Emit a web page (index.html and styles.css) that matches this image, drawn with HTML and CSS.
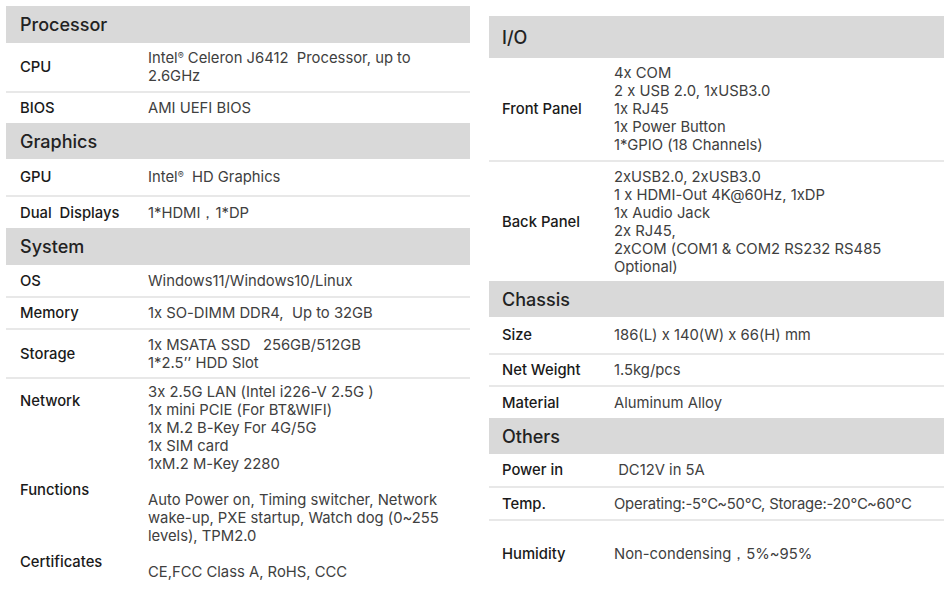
FILE: index.html
```html
<!DOCTYPE html>
<html lang="en">
<head>
<meta charset="utf-8">
<title>Specifications</title>
<link rel="stylesheet" href="styles.css">
</head>
<body>
<div class="page">
  <div class="col col-left">
    <div class="sec-head h37">Processor</div>
    <div class="row sep h48"><div class="lbl">CPU</div><div class="val">Intel<sup>®</sup> Celeron J6412&nbsp; Processor, up to<br>2.6GHz</div></div>
    <div class="row h30"><div class="lbl">BIOS</div><div class="val">AMI UEFI BIOS</div></div>
    <div class="sec-head h36">Graphics</div>
    <div class="row sep h36"><div class="lbl">GPU</div><div class="val">Intel<sup>®</sup>&nbsp; HD Graphics</div></div>
    <div class="row h31"><div class="lbl">Dual&nbsp; Displays</div><div class="val">1*HDMI，1*DP</div></div>
    <div class="sec-head h37">System</div>
    <div class="row sep h31"><div class="lbl">OS</div><div class="val">Windows11/Windows10/Linux</div></div>
    <div class="row sep h30"><div class="lbl">Memory</div><div class="val">1x SO-DIMM DDR4,&nbsp; Up to 32GB</div></div>
    <div class="row sep h47"><div class="lbl">Storage</div><div class="val">1x MSATA SSD&nbsp;&nbsp; 256GB/512GB<br>1*2.5’’ HDD Slot</div></div>
    <div class="row top net"><div class="lbl">Network</div><div class="val">3x 2.5G LAN (Intel i226-V 2.5G )<br>1x mini PCIE (For BT&amp;WIFI)<br>1x M.2 B-Key For 4G/5G<br>1x SIM card<br>1xM.2 M-Key 2280</div></div>
    <div class="row top offset"><div class="lbl">Functions</div><div class="val">Auto Power on, Timing switcher, Network<br>wake-up, PXE startup, Watch dog (0~255<br>levels), TPM2.0</div></div>
    <div class="row top offset"><div class="lbl">Certificates</div><div class="val">CE,FCC Class A, RoHS, CCC</div></div>
  </div>
  <div class="col col-right">
    <div class="sec-head h42">I/O</div>
    <div class="row sep h102"><div class="lbl">Front Panel</div><div class="val">4x COM<br>2 x USB 2.0, 1xUSB3.0<br>1x RJ45<br>1x Power Button<br>1*GPIO (18 Channels)</div></div>
    <div class="row h119"><div class="lbl">Back Panel</div><div class="val">2xUSB2.0, 2xUSB3.0<br>1 x HDMI-Out 4K@60Hz, 1xDP<br>1x Audio Jack<br>2x RJ45,<br>2xCOM (COM1 &amp; COM2 RS232 RS485<br>Optional)</div></div>
    <div class="sec-head h36">Chassis</div>
    <div class="row sep h36"><div class="lbl">Size</div><div class="val">186(L) x 140(W) x 66(H) mm</div></div>
    <div class="row sep h30"><div class="lbl">Net Weight</div><div class="val">1.5kg/pcs</div></div>
    <div class="row h31"><div class="lbl">Material</div><div class="val">Aluminum Alloy</div></div>
    <div class="sec-head h36">Others</div>
    <div class="row sep h32"><div class="lbl">Power in</div><div class="val">&nbsp;DC12V in 5A</div></div>
    <div class="row sep h31"><div class="lbl">Temp.</div><div class="val tight">Operating:-5<span class="deg">℃</span>~50<span class="deg">℃</span>, Storage:-20<span class="deg">℃</span>~60<span class="deg">℃</span></div></div>
    <div class="row top hum"><div class="lbl">Humidity</div><div class="val">Non-condensing，5%~95%</div></div>
  </div>
</div>
</body>
</html>
```

FILE: styles.css
```css
* { box-sizing: border-box; }
html, body { margin: 0; padding: 0; background: #ffffff; }
body {
  font-family: Inter, "Noto Sans", "DejaVu Sans", sans-serif;
  font-size: 14.8px;
  font-feature-settings: "calt" 0;
  color: #3a3a3a;
}
.page {
  display: flex;
  align-items: flex-start;
  gap: 19px;
  padding: 6px 0 0 6px;
}
.col { display: flex; flex-direction: column; }
.col-left { width: 464px; }
.col-right { width: 455px; margin-top: 10px; }

.sec-head {
  background: #d9d9d9;
  color: #222222;
  font-size: 18px;
  font-weight: 500;
  display: flex;
  align-items: center;
  padding-left: 14px;
}
.col-right .sec-head { padding-left: 13px; }

.row {
  display: grid;
  grid-template-columns: 128px 1fr;
  align-items: center;
  padding-left: 14px;
  line-height: 18px;
}
.col-right .row { grid-template-columns: 112px 1fr; padding-left: 13px; }
.row.sep { border-bottom: 2px solid #e8e8e8; }
.row.top { align-items: start; }

.lbl { color: #1a1a1a; font-weight: 500; white-space: nowrap; }
.val { color: #404040; white-space: nowrap; }
.val.tight { letter-spacing: -0.2px; }
.val sup { font-size: 9px; vertical-align: 4px; line-height: 0; }
.deg { letter-spacing: -1px; }

.h30 { height: 32px; }
.h31 { height: 33px; }
.h32 { height: 34px; }
.h36 { height: 36px; }
.h37 { height: 37px; }
.h42 { height: 42px; }
.h47 { height: 49px; }
.h48 { height: 50px; }
.h102 { height: 104px; }
.h119 { height: 119px; }
.sec-head.h36 { height: 36px; }
.row.sep.h36 { height: 38px; }
.row.h30:not(.sep) { height: 30px; }
.row.h31:not(.sep) { height: 31px; }

.net { padding-top: 4px; }
.net .lbl { padding-top: 9px; }
.offset { padding-top: 0; }
.offset .lbl { padding-top: 8px; }
.offset .val { padding-top: 18px; }
.hum { padding-top: 24px; }
```
